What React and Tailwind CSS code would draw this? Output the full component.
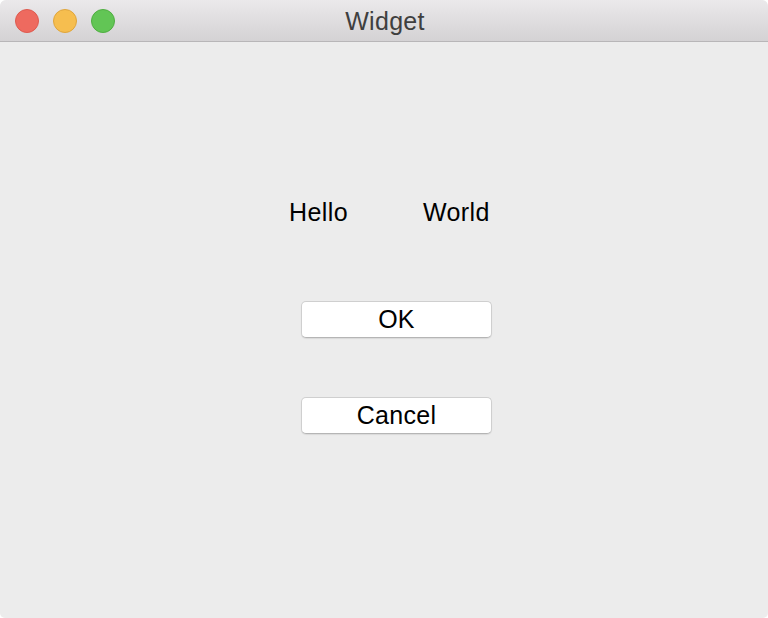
import React from 'react';

const font = { fontFamily: '"Liberation Sans", Arial, sans-serif' };

function TitleBar() {
  return (
    <div className="relative flex h-[42px] items-center border-b border-[#b8b6b8] bg-gradient-to-b from-[#ebe9eb] to-[#d4d2d4] rounded-t-[6px]">
      <div className="flex items-center gap-[14px] pl-[15px]">
        <span className="h-[24px] w-[24px] rounded-full border border-[#de5a4f] bg-[#ee6a5f]" />
        <span className="h-[24px] w-[24px] rounded-full border border-[#dfa53c] bg-[#f6be4f]" />
        <span className="h-[24px] w-[24px] rounded-full border border-[#4fae41] bg-[#62c555]" />
      </div>
      <div className="absolute inset-0 flex items-center justify-center pl-[2px] pt-[2px] text-[25px] tracking-[0.3px] text-[#3f3f3f]">
        Widget
      </div>
    </div>
  );
}

function Button({ children }) {
  return (
    <button className="flex h-[37px] w-[191px] items-center justify-center rounded-[5px] border border-[#cfcfcf] border-b-[#b5b5b5] bg-white text-[25px] leading-none tracking-[0.3px] text-black shadow-[0_1px_1px_rgba(0,0,0,0.08)]">
      {children}
    </button>
  );
}

export default function App() {
  return (
    <div className="h-[618px] w-[768px] bg-white" style={font}>
      <div className="flex h-full flex-col overflow-hidden rounded-t-[6px] rounded-b-[5px] bg-[#ececec]">
        <TitleBar />
        <div className="flex-1 pt-[155px]">
          <div className="flex h-[30px] items-center pl-[289px] text-[25px] leading-[30px] tracking-[0.4px] text-black">
            <span className="w-[134px]">Hello</span>
            <span>World</span>
          </div>
          <div className="ml-[301px] mt-[74px]">
            <Button>OK</Button>
          </div>
          <div className="ml-[301px] mt-[59px]">
            <Button>Cancel</Button>
          </div>
        </div>
      </div>
    </div>
  );
}
